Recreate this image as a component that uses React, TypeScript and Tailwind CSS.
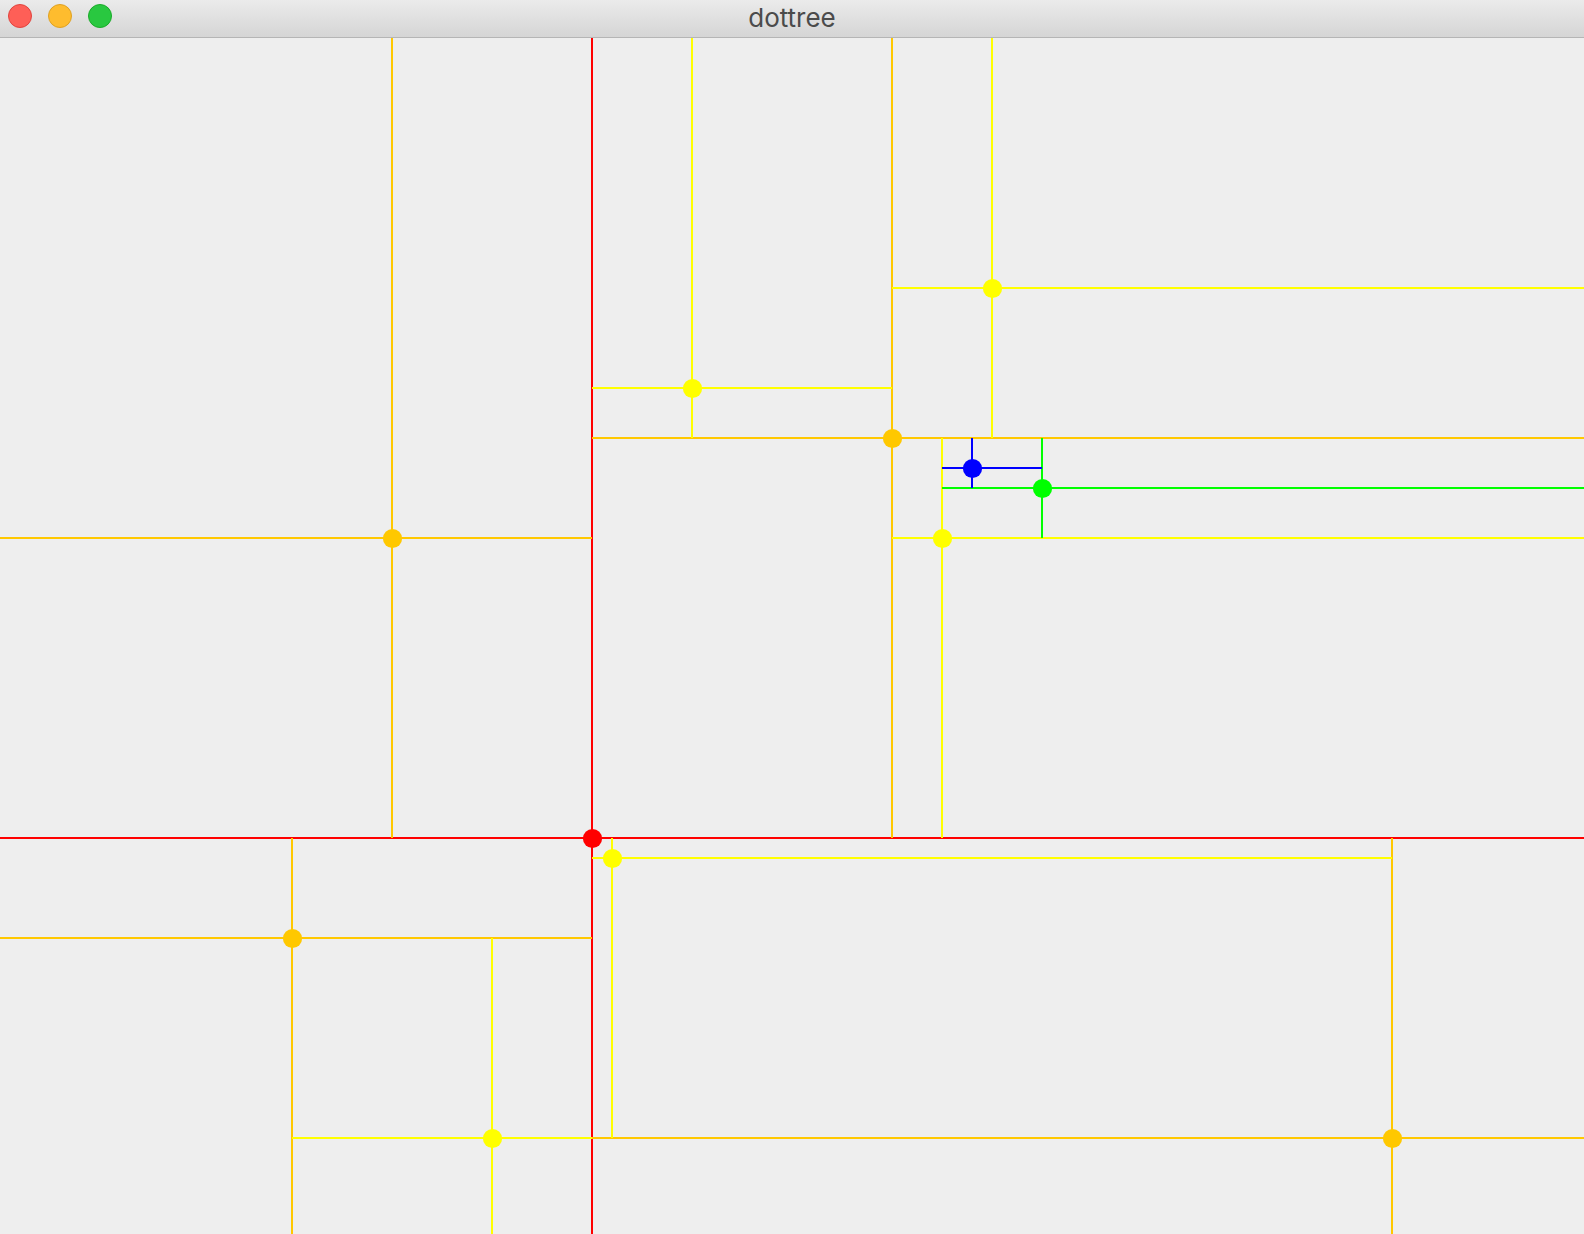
import React from "react";

type Node = {
  x: number;
  y: number;
  color: string;
  v: [number, number]; // vertical line y-range
  h: [number, number]; // horizontal line x-range
};

const W = 1584;
const H = 1196;

const RED = "#ff0000";
const ORANGE = "#ffc800";
const YELLOW = "#ffff00";
const GREEN = "#00ff00";
const BLUE = "#0000ff";

const nodes: Node[] = [
  { x: 592, y: 800, color: RED, v: [0, H], h: [0, W] },
  { x: 392, y: 500, color: ORANGE, v: [0, 800], h: [0, 592] },
  { x: 892, y: 400, color: ORANGE, v: [0, 800], h: [592, W] },
  { x: 692, y: 350, color: YELLOW, v: [0, 400], h: [592, 892] },
  { x: 992, y: 250, color: YELLOW, v: [0, 400], h: [892, W] },
  { x: 942, y: 500, color: YELLOW, v: [400, 800], h: [892, W] },
  { x: 1042, y: 450, color: GREEN, v: [400, 500], h: [942, W] },
  { x: 972, y: 430, color: BLUE, v: [400, 450], h: [942, 1042] },
  { x: 292, y: 900, color: ORANGE, v: [800, H], h: [0, 592] },
  { x: 492, y: 1100, color: YELLOW, v: [900, H], h: [292, 592] },
  { x: 1392, y: 1100, color: ORANGE, v: [800, H], h: [592, W] },
  { x: 612, y: 820, color: YELLOW, v: [800, 1100], h: [592, 1392] },
];

function TrafficLight({ fill, border }: { fill: string; border: string }) {
  return (
    <svg width="24" height="24" viewBox="0 0 24 24">
      <circle cx="12" cy="12" r="11.5" fill={fill} stroke={border} strokeWidth="1" />
    </svg>
  );
}

export default function App() {
  return (
    <div className="flex h-[1234px] w-[1584px] flex-col overflow-hidden bg-[#eeeeee]">
      <div className="relative flex h-[38px] shrink-0 items-center border-b border-[#b5b5b5] bg-gradient-to-b from-[#ebebeb] to-[#d5d5d5]">
        <div className="flex items-center gap-[16px] pb-[5px] pl-[8px]">
          <TrafficLight fill="#fe5f57" border="#e0443e" />
          <TrafficLight fill="#febc2e" border="#dea123" />
          <TrafficLight fill="#29c840" border="#1aab29" />
        </div>
        <div className="absolute inset-0 flex items-center justify-center pb-[3px] font-['Inter',sans-serif] text-[26px] text-[#4b4b4b]">
          dottree
        </div>
      </div>
      <div className="flex-1">
        <svg width={W} height={H} viewBox={`0 0 ${W} ${H}`} className="block">
          <g shapeRendering="crispEdges" strokeWidth="2">
            {nodes.map((n, i) => (
              <g key={i} stroke={n.color}>
                <line x1={n.x} y1={n.v[0]} x2={n.x} y2={n.v[1]} />
                <line x1={n.h[0]} y1={n.y} x2={n.h[1]} y2={n.y} />
              </g>
            ))}
          </g>
          {nodes.map((n, i) => (
            <circle key={i} cx={n.x + 0.5} cy={n.y + 0.5} r={9.6} fill={n.color} />
          ))}
        </svg>
      </div>
    </div>
  );
}
